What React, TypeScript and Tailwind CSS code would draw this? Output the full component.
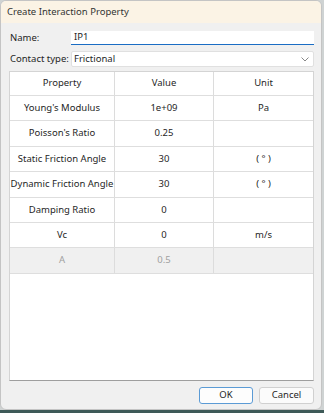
import React from "react";

const rows: { p: string; v: string; u: string; dis?: boolean }[] = [
  { p: "Young's Modulus", v: "1e+09", u: "Pa" },
  { p: "Poisson's Ratio", v: "0.25", u: "" },
  { p: "Static Friction Angle", v: "30", u: "( ° )" },
  { p: "Dynamic Friction Angle", v: "30", u: "( ° )" },
  { p: "Damping Ratio", v: "0", u: "" },
  { p: "Vc", v: "0", u: "m/s" },
  { p: "A", v: "0.5", u: "", dis: true },
];

export default function App() {
  return (
    <div
      className="w-[324px] h-[413px] bg-[#cfd3d3] flex flex-col text-[#1f1f1f]"
      style={{ fontFamily: '"Noto Sans", "Open Sans", sans-serif' }}
    >
      <div className="w-[322px] h-[410px] rounded-[6px] border border-[#c4c4c4] overflow-hidden flex flex-col bg-[#f0f0f0]">
        <div className="h-[22px] shrink-0 bg-[#fbf3e5] px-[6px] flex items-center text-[9.5px] text-[#333]">
          Create Interaction Property
        </div>
        <div className="flex-1 flex flex-col pl-[8px] pr-[7px] pt-[8px] pb-[5px]">
          <div className="flex items-center h-[14px] text-[9.5px]">
            <div className="w-[62px] pl-[1px]">Name:</div>
            <div className="flex-1 h-[14px] bg-white border-b-[1.5px] border-[#1a6dc4] flex items-center px-[3px]">
              IP1
            </div>
          </div>
          <div className="flex items-center h-[16px] mt-[6px] text-[9.5px]">
            <div className="w-[62px] pl-[1px]">Contact type:</div>
            <div className="flex-1 h-[16px] bg-white border border-[#e0e0e0] rounded-[2px] flex items-center justify-between pl-[2px] pr-[4px]">
              <span>Frictional</span>
              <svg width="8" height="5" viewBox="0 0 8 5">
                <path d="M0.5 0.5 L4 4 L7.5 0.5" fill="none" stroke="#888" strokeWidth="1" />
              </svg>
            </div>
          </div>
          <div className="mt-[4px] h-[310px] bg-white border border-[#d4d4d4] border-b-[#9e9e9e] flex flex-col text-[9.5px]">
            <div className="flex h-[24px] border-b-[1.5px] border-[#dedede] shrink-0">
              <div className="w-[105px] border-r border-[#dcdcdc] flex items-center justify-center">Property</div>
              <div className="w-[99px] border-r border-[#dcdcdc] flex items-center justify-center">Value</div>
              <div className="flex-1 flex items-center justify-center">Unit</div>
            </div>
            {rows.map((r) => (
              <div
                key={r.p}
                className={`flex h-[25.4px] border-b-[1.5px] border-[#dedede] shrink-0 ${
                  r.dis ? "bg-[#f0f0f0] text-[#a0a0a0]" : "text-[#1f1f1f]"
                }`}
              >
                <div className="w-[105px] border-r border-[#dcdcdc] flex items-center justify-center whitespace-nowrap">
                  {r.p}
                </div>
                <div className="w-[99px] border-r border-[#dcdcdc] flex items-center justify-center">{r.v}</div>
                <div className="flex-1 flex items-center justify-center">{r.u}</div>
              </div>
            ))}
          </div>
          <div className="flex justify-end gap-[6px] mt-[6px] text-[9.5px]">
            <button className="w-[54px] h-[17px] bg-[#fdfdfd] border border-[#5b9bd5] rounded-[3px] flex items-center justify-center">
              OK
            </button>
            <button className="w-[55px] h-[17px] bg-[#fbfbfb] border border-[#d0d0d0] rounded-[3px] flex items-center justify-center">
              Cancel
            </button>
          </div>
        </div>
      </div>
      <div className="flex-1 bg-[#3e5a58]" />
    </div>
  );
}
